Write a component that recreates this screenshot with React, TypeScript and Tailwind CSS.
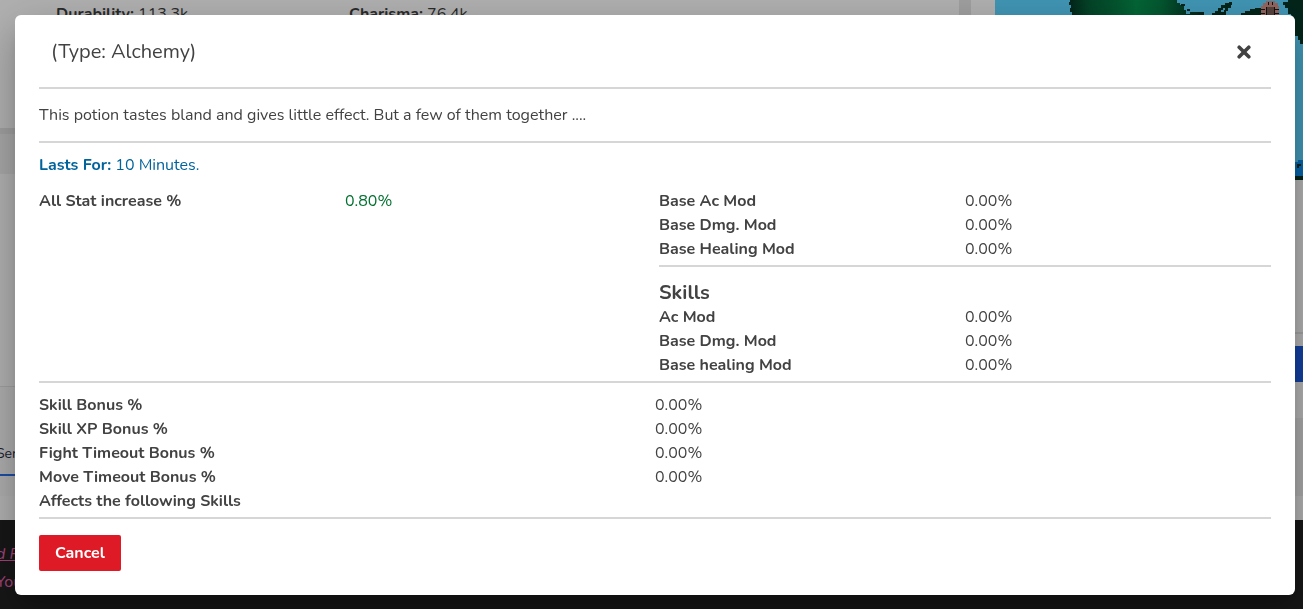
import React from "react";

type Stat = { label: string; value?: string; tone?: string };

const SANS = "font-['Nunito',Lato,sans-serif]";

function Divider({ className = "" }: { className?: string }) {
  return <hr className={`border-0 h-0.5 bg-[#d6d6d6] ${className}`} />;
}

function StatList({ stats }: { stats: Stat[] }) {
  return (
    <dl className="grid grid-cols-2">
      {stats.map((s) => (
        <React.Fragment key={s.label}>
          <dt className="font-bold">{s.label}</dt>
          <dd className={s.tone}>{s.value}</dd>
        </React.Fragment>
      ))}
    </dl>
  );
}

function WorldMap() {
  return (
    <svg viewBox="0 0 308 180" preserveAspectRatio="xMinYMin slice" className="block h-[180px] w-full bg-[#4196b5]" shapeRendering="crispEdges" aria-hidden="true">
      <defs>
        <linearGradient id="land" x1="0" x2="1" y1="0" y2="0">
          <stop offset="0" stopColor="#03251a" />
          <stop offset="0.15" stopColor="#044428" />
          <stop offset="0.3" stopColor="#04502d" />
          <stop offset="0.5" stopColor="#046636" />
          <stop offset="0.68" stopColor="#045730" />
          <stop offset="0.9" stopColor="#03301f" />
          <stop offset="1" stopColor="#03251a" />
        </linearGradient>
      </defs>
      <path fill="url(#land)" d="M75 0h107v3h3v2h4v5h2v4h4v-2h9v2h5v4H79v-3h-2v-3h-2V8h1V5h-2V2h1z" />
      <path fill="#03251a" d="M217 15v-2h3v-2h3V8h3V5h4V3h4V2h3v3h-1v3h-3v3h-2v4zM246 15v-2h4v-2h5V9h5V8h8v7zM288 2h5V0h15v44h-3v-4h-2v-4h-3V19h-4v-5h-3V8h-3V5h-2z" />
      <path fill="#03251a" d="M186 4h4v2h-4zM192 9h3v2h-3zM203 12h6v2h-6z" />
      <path fill="#4196b5" d="M226 12v-2h2V8h2v2h-1v2z" />
      <path fill="#94655f" d="M266 15V6h2V3h3V1h9v2h3v3h1v9z" />
      <path fill="#57423c" d="M271 7h8v8h-8z" />
      <path stroke="#111111" fill="none" d="M266 9h4M266 13h4M280 9h4M280 13h4M271 7v8M279 7v8M273 2v3M277 2v3" />
      <path fill="#0664a8" d="M300 162h3v-2h5v16h-8z" />
      <path fill="#03251a" d="M302 164h4v2h-2v2h-2zM300 176h8v4h-8z" />
    </svg>
  );
}

function Page() {
  return (
    <div aria-hidden="true" className="flex h-screen flex-col overflow-hidden bg-[#a0a0a0] text-[#2b2b2b]">
      <div className="flex h-[496px] shrink-0">
        <div className="flex min-w-0 flex-1 flex-col">
          <div className="flex h-32 bg-[#b1b1b1] pt-0.5 pl-14">
            <p className="w-[293px]"><b>Durability:</b> 113.3k</p>
            <p><b>Charisma:</b> 76.4k</p>
          </div>
          <div className="mt-1.5 h-10 bg-[#a8a8a8]" />
          <div className="h-[212px] bg-[#b1b1b1]" />
          <div className="flex-1 border-t border-[#a0a0a0] bg-[#aeaeae] pt-[55px]">
            <div className="h-[34px] w-10 border-b-2 border-[#1d4ea8]">
              <p className="-ml-1 text-sm leading-6 text-[#1b2230]">Server</p>
            </div>
          </div>
        </div>
        <div className="ml-3 w-[332px] bg-[#b1b1b1] pl-6">
          <WorldMap />
          <div className="h-[154px] border-b-2 border-[#a0a0a0]" />
          <div className="mt-3 h-9 bg-[#123f9e]" />
          <div className="mt-9 h-[78px] bg-[#a8a8a8]" />
        </div>
      </div>
      <div className="h-6 shrink-0 bg-[#b1b1b1]" />
      <div className="flex-1 bg-[#171717] pt-5 text-[#a8437c]">
        <p className="-ml-1 leading-7 italic underline">d Planes</p>
        <p className="-ml-1 leading-7">You</p>
      </div>
    </div>
  );
}

export default function App() {
  return (
    <main className={`${SANS} text-base leading-6`}>
      <Page />
      <div className="fixed inset-0 overflow-hidden p-[15px] pr-2">
        <section
          role="dialog"
          aria-modal="true"
          aria-labelledby="item-title"
          className="rounded-md bg-white p-6 pt-0 text-[#424242] shadow-[0_11px_15px_-7px_rgba(0,0,0,0.2),0_24px_38px_3px_rgba(0,0,0,0.14),0_9px_46px_8px_rgba(0,0,0,0.12)]"
        >
          <header className="flex h-18 items-center justify-between px-3 pt-0.5">
            <h2 id="item-title" className="text-xl">(Type: Alchemy)</h2>
            <button type="button" aria-label="Close" className="p-2">
              <svg viewBox="0 0 14 14" className="size-3.5" aria-hidden="true">
                <path d="M2.2 2.2l9.6 9.6M11.8 2.2l-9.6 9.6" stroke="currentColor" strokeWidth="3.6" strokeLinecap="round" />
              </svg>
            </button>
          </header>
          <Divider />
          <p className="py-3.5">This potion tastes bland and gives little effect. But a few of them together ....</p>
          <Divider />
          <p className="pt-2.5 pb-3 text-[#00639c]"><b>Lasts For:</b> 10 Minutes.</p>
          <div className="grid grid-cols-2 gap-2 pb-1">
            <StatList stats={[{ label: "All Stat increase %", value: "0.80%", tone: "text-[#00702f]" }]} />
            <div>
              <StatList
                stats={[
                  { label: "Base Ac Mod", value: "0.00%" },
                  { label: "Base Dmg. Mod", value: "0.00%" },
                  { label: "Base Healing Mod", value: "0.00%" },
                ]}
              />
              <Divider className="mt-1 mb-3.5" />
              <h3 className="text-xl leading-6 font-bold">Skills</h3>
              <StatList
                stats={[
                  { label: "Ac Mod", value: "0.00%" },
                  { label: "Base Dmg. Mod", value: "0.00%" },
                  { label: "Base healing Mod", value: "0.00%" },
                ]}
              />
            </div>
          </div>
          <Divider className="mb-2.5" />
          <StatList
            stats={[
              { label: "Skill Bonus %", value: "0.00%" },
              { label: "Skill XP Bonus %", value: "0.00%" },
              { label: "Fight Timeout Bonus %", value: "0.00%" },
              { label: "Move Timeout Bonus %", value: "0.00%" },
              { label: "Affects the following Skills" },
            ]}
          />
          <Divider className="mt-1 mb-4" />
          <button type="button" className="h-9 rounded-xs bg-[#dd1a26] px-4 font-bold text-white">Cancel</button>
        </section>
      </div>
    </main>
  );
}
